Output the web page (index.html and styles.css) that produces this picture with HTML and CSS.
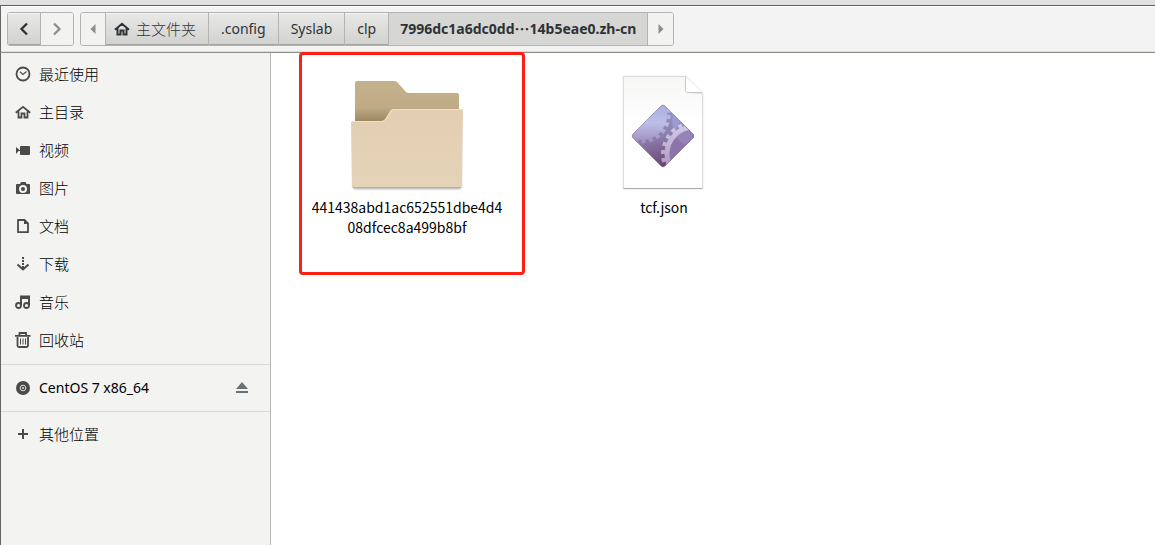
FILE: index.html
```html
<!DOCTYPE html>
<html lang="zh-CN">
<head>
<meta charset="utf-8">
<title>7996dc1a6dc0dd…14b5eae0.zh-cn</title>
<link rel="stylesheet" href="styles.css">
</head>
<body>
<div class="window">
  <header class="toolbar">
    <div class="group">
      <button class="btn nav-btn" type="button" aria-label="后退"><svg width="16" height="16" viewBox="0 0 16 16"><path d="M11 2.500L5.500 8L11 13.500" fill="none" stroke="#2e3436" stroke-width="2.300"/></svg></button>
      <button class="btn nav-btn flat" type="button" aria-label="前进" disabled><svg width="16" height="16" viewBox="0 0 16 16"><path d="M5 2.500L10.500 8L5 13.500" fill="none" stroke="#8d9091" stroke-width="2.300"/></svg></button>
    </div>
    <nav class="group" aria-label="路径">
      <button class="btn arrow-btn flat" type="button" aria-label="向左滚动"><svg width="8" height="12" viewBox="0 0 8 12"><path d="M6.500 1v10L1.500 6z" fill="#8b8e8f"/></svg></button>
      <button class="btn crumb home" type="button"><svg width="16" height="16" viewBox="0 0 16 16"><path d="M1 8.800L8 2.800L15 8.800M3.500 7v6.500H6.500V9.500H9.500V13.500H12.500V7" fill="none" stroke="#2e3436" stroke-width="2"/></svg><span class="cjk">主文件夹</span></button>
      <button class="btn crumb" type="button">.config</button>
      <button class="btn crumb" type="button">Syslab</button>
      <button class="btn crumb" type="button">clp</button>
      <button class="btn crumb current" type="button" aria-current="page">7996dc1a6dc0dd<span class="dots">…</span>14b5eae0.zh-cn</button>
      <button class="btn arrow-btn flat" type="button" aria-label="向右滚动"><svg width="8" height="12" viewBox="0 0 8 12"><path d="M1.500 1v10L6.500 6z" fill="#8b8e8f"/></svg></button>
    </nav>
  </header>
  <div class="body">
    <aside class="sidebar">
      <ul class="places">
        <li><a class="place" href="#recent"><svg viewBox="0 0 16 16"><circle cx="8" cy="8" r="6.500" fill="none" stroke="#4a4a48" stroke-width="1.800"/><path d="M5 5.800L8 8.400L11.500 5.500" fill="none" stroke="#4a4a48" stroke-width="1.200"/></svg><span>最近使用</span></a></li>
        <li><a class="place" href="#home"><svg viewBox="0 0 16 16"><path d="M.8 8.800L8 2.800L15.200 8.800M3.500 7.500v6H6.500V9.500H9.500V13.500H12.500V7.500" fill="none" stroke="#4a4a48" stroke-width="1.800"/></svg><span>主目录</span></a></li>
        <li><a class="place" href="#videos"><svg viewBox="0 0 16 16"><path d="M1 5L4.500 8L1 12zM6 4H14Q15 4 15 5V12Q15 13 14 13H6Q5 13 5 12V9H4V8H5V5Q5 4 6 4z" fill="#4a4a48"/></svg><span>视频</span></a></li>
        <li><a class="place" href="#pictures"><svg viewBox="0 0 16 16"><path fill-rule="evenodd" d="M2 4H5L6 2H10.500L11.500 4H14Q15 4 15 5V13Q15 14 14 14H2Q1 14 1 13V5Q1 4 2 4zM8 5A4 4 0 1 0 8 13A4 4 0 1 0 8 5z" fill="#4a4a48"/><circle cx="8" cy="9" r="2" fill="#4a4a48"/></svg><span>图片</span></a></li>
        <li><a class="place" href="#documents"><svg viewBox="0 0 16 16"><path d="M3 2H9.500L13 5.500V14.200H3z" fill="none" stroke="#4a4a48" stroke-width="1.800" stroke-linejoin="round"/><path d="M9 2V6H13z" fill="#4a4a48"/></svg><span>文档</span></a></li>
        <li><a class="place" href="#downloads"><svg viewBox="0 0 16 16"><path d="M7 1h2v2H7zM7 4h2v2H7zM7 7h2v2H7zM7 10h2v3H7z" fill="#4a4a48"/><path d="M2.500 8.500L8 13.500L13.500 8.500" fill="none" stroke="#4a4a48" stroke-width="2"/></svg><span>下载</span></a></li>
        <li><a class="place" href="#music"><svg viewBox="0 0 16 16"><path d="M6 11.500V2.500H14V11.500M6 4H14" fill="none" stroke="#4a4a48" stroke-width="2"/><circle cx="3.500" cy="11.500" r="2.500" fill="none" stroke="#4a4a48" stroke-width="1.800"/><circle cx="11.500" cy="11.500" r="2.500" fill="none" stroke="#4a4a48" stroke-width="1.800"/></svg><span>音乐</span></a></li>
        <li><a class="place" href="#trash"><svg viewBox="0 0 16 16"><path d="M0 3.800H15.500M4.500 3V1H11V3M2.500 5V13.500Q2.500 15 4 15H11.500Q13 15 13 13.500V5" fill="none" stroke="#4a4a48" stroke-width="1.800"/><path d="M5.500 6.500v6M8 6.500v6M10.500 6.500v6" stroke="#4a4a48" stroke-width="1"/></svg><span>回收站</span></a></li>
      </ul>
      <div class="places device">
        <a class="place" href="#centos"><svg viewBox="0 0 16 16"><circle cx="8" cy="8" r="7" fill="#4a4a48"/><circle cx="8" cy="8" r="2.800" fill="none" stroke="#ddd" stroke-width="1"/><circle cx="8" cy="8" r="1" fill="#ddd"/></svg><span class="latin">CentOS 7 x86_64</span></a>
        <button class="eject" type="button" aria-label="弹出"><svg width="12" height="12" viewBox="0 0 12 12"><path d="M6 0L12 7H0zM0 9H12V11H0z" fill="#6b7073"/></svg></button>
      </div>
      <div class="places other">
        <a class="place" href="#other"><svg viewBox="0 0 16 16"><path d="M8 3V13M3 8H13" stroke="#4a4a48" stroke-width="2"/></svg><span>其他位置</span></a>
      </div>
    </aside>
    <main class="files">
      <figure class="file">
        <svg class="file-icon" viewBox="0 0 116 116" aria-hidden="true">
          <defs>
            <linearGradient id="back" x1="0" y1="0" x2="0" y2="1"><stop offset="0" stop-color="#c3b18c"/><stop offset=".65" stop-color="#bfac86"/><stop offset="1" stop-color="#9c8962"/></linearGradient>
            <linearGradient id="front" x1="0" y1="0" x2="0" y2="1"><stop offset="0" stop-color="#e3ceb3"/><stop offset="1" stop-color="#e4d3b8"/></linearGradient>
            <filter id="soft" x="-10%" y="-10%" width="120%" height="120%"><feGaussianBlur stdDeviation="1.200"/></filter>
          </defs>
          <rect x="4" y="60" width="108" height="54" rx="2" fill="#000" opacity=".35" filter="url(#soft)"/>
          <path d="M6 46V8Q6 6 8 6H45Q47 6 48 7L57 17Q58 18 60 18H108Q110 18 110 20V46z" fill="url(#back)"/>
          <path d="M2 48Q2 46 4 46H32Q35 46 36 44L41 36Q42 34 44 34H112Q114 34 114 36L113 111Q113 113 111 113H5Q3 113 3 111z" fill="url(#front)"/>
          <path d="M3 46.500H33Q36 46 37 44L42 36Q43 34.500 45 34.500H112" fill="none" stroke="#efe0cb" stroke-width="1"/>
          <path d="M4 112.500H112" stroke="#c9ad87" stroke-width="1"/>
        </svg>
        <figcaption>441438abd1ac652551dbe4d408dfcec8a499b8bf</figcaption>
        <span class="highlight"></span>
      </figure>
      <figure class="file">
        <svg class="file-icon" viewBox="0 0 116 116" aria-hidden="true">
          <defs>
            <linearGradient id="page" x1="0" y1="0" x2="0" y2="1"><stop offset="0" stop-color="#f6f6f5"/><stop offset=".4" stop-color="#fff"/></linearGradient>
            <linearGradient id="gem" x1=".3" y1="0" x2=".5" y2="1"><stop offset="0" stop-color="#9a9fd0"/><stop offset=".5" stop-color="#8d80b0"/><stop offset="1" stop-color="#68426f"/></linearGradient>
            <linearGradient id="wheel" gradientUnits="userSpaceOnUse" x1="0" y1="29" x2="0" y2="70"><stop offset="0" stop-color="#a9aede"/><stop offset=".45" stop-color="#bcbfe8"/><stop offset="1" stop-color="#9d88ba"/></linearGradient>
            <linearGradient id="ring" gradientUnits="userSpaceOnUse" x1="0" y1="48" x2="0" y2="93"><stop offset="0" stop-color="#cfcde9"/><stop offset="1" stop-color="#b597bd"/></linearGradient>
            <clipPath id="diamond"><path d="M55 31Q57 29 59 31L87 59Q89 61 87 63L59 91Q57 93 55 91L27 63Q25 61 27 59z"/></clipPath>
          </defs>
          <path d="M17.500 1.500H79.500L96.500 18.500V113.500H17.500z" fill="#000" opacity=".2" filter="url(#soft)"/>
          <path d="M17.500 1.500H79.500L96.500 18.500V113.500H17.500z" fill="url(#page)" stroke="#ddd"/>
          <path d="M17.500 113.500H96.500" stroke="#aaa"/>
          <path d="M80 4L82 18L96 19" fill="#ccc" opacity=".6"/>
          <path d="M79.500 1.500V15.500Q79.500 17.500 81.500 17.500H96" fill="#fff" stroke="#c8c8c8"/>
          <g clip-path="url(#diamond)">
            <rect x="25" y="29" width="64" height="64" fill="url(#gem)"/>
            <circle cx="36" cy="40" r="25" fill="url(#wheel)"/>
            <circle cx="36" cy="40" r="26.500" fill="none" stroke="url(#wheel)" stroke-width="4" stroke-dasharray="4 3.570"/>
            <circle cx="82" cy="46" r="16" fill="#9d9bd3"/>
            <circle cx="88" cy="79" r="27" fill="#8b74a9"/>
            <circle cx="83" cy="57" r="13" fill="#9482b9"/>
            <circle cx="88" cy="79" r="27" fill="none" stroke="url(#ring)" stroke-width="5"/>
            <circle cx="88" cy="79" r="31" fill="none" stroke="url(#ring)" stroke-width="4" stroke-dasharray="4 4.100"/>
          </g>
          <path d="M55 31Q57 29 59 31L87 59Q89 61 87 63L59 91Q57 93 55 91L27 63Q25 61 27 59z" fill="none" stroke="#6f6095" stroke-opacity=".4"/>
        </svg>
        <figcaption>tcf.json</figcaption>
      </figure>
    </main>
  </div>
</div>
</body>
</html>
```
FILE: styles.css
```css
* { box-sizing: border-box; }
body {
  margin: 0;
  background: #fff;
  color: #000;
  font: 14px/20px "Noto Sans CJK SC", "Noto Sans", sans-serif;
}
.window {
  min-height: 100vh;
  display: flex;
  flex-direction: column;
  border-top: 5px solid #e1e1e1;
}
.toolbar {
  display: flex;
  gap: 6px;
  padding: 6px;
  border-top: 1px solid #5f5d5f;
  border-left: 1px solid #666;
  border-bottom: 1px solid #8f8e86;
  background: #f3f3f3;
  box-shadow: inset 0 1px #fff, inset 0 -1px #dededa;
}
.group {
  display: flex;
  border: 1px solid #b3b3b0;
  border-radius: 3px;
  overflow: hidden;
}
.btn {
  display: flex;
  align-items: center;
  justify-content: center;
  height: 32px;
  margin: 0;
  padding: 0 12px;
  border: 0;
  border-right: 1px solid #b3b3b0;
  background: linear-gradient(#e8e8e7, #d1d1cf);
  box-shadow: inset 0 1px #f5f5f5, inset 0 -1px #a3a39f;
  color: #2e3436;
  font: inherit;
  font-family: "Noto Sans", "Noto Sans CJK SC", sans-serif;
  white-space: nowrap;
}
.btn:last-child { border-right: 0; }
.btn.flat { background: #f2f2f1; box-shadow: none; }
.nav-btn { width: 33px; padding: 0; }
.nav-btn.flat { width: 32px; }
.arrow-btn { width: 25px; padding: 0; }
.home { padding: 0 12px 0 8px; gap: 6px; }
.current {
  padding: 0 11px;
  background: #d6d6d4;
  box-shadow: none;
  font-weight: 700;
}
.cjk, .place { font-family: "Noto Sans CJK SC", sans-serif; font-size: 15px; font-weight: 300; }
.dots { font-family: "Noto Sans CJK SC", sans-serif; font-size: 15px; }
.body { flex: 1; display: flex; }
.sidebar {
  flex: none;
  width: 271px;
  border-left: 1px solid #666;
  border-right: 1px solid #b8b8b4;
  background: #f3f3f2;
}
.places {
  margin: 0;
  padding: 4px 0;
  list-style: none;
}
ul.places { padding: 2px 0 5px; }
.other { padding-top: 3px; }
.device {
  display: flex;
  border-top: 1px solid #d8d8d6;
  border-bottom: 1px solid #d8d8d6;
}
.place {
  flex: 1;
  display: flex;
  align-items: center;
  gap: 8px;
  height: 38px;
  padding-left: 14px;
  color: #000;
  text-decoration: none;
}
.place svg { width: 16px; height: 16px; }
.latin { font-family: "Noto Sans", sans-serif; font-size: 14px; font-weight: 400; }
.eject {
  display: flex;
  align-items: center;
  padding: 0 22px;
  border: 0;
  background: none;
}
.files {
  flex: 1;
  display: flex;
  flex-wrap: wrap;
  align-content: flex-start;
  gap: 65px;
  padding: 22px 40px;
  background: #fff;
}
.file {
  position: relative;
  width: 192px;
  margin: 0;
  text-align: center;
}
.file-icon {
  display: block;
  width: 116px;
  height: 116px;
  margin: 0 auto 6px;
}
.file figcaption { overflow-wrap: anywhere; }
.highlight {
  position: absolute;
  top: -23px;
  left: -12px;
  width: 226px;
  height: 223px;
  border: 3px solid #ff1f14;
  border-radius: 4px;
  pointer-events: none;
}
```
